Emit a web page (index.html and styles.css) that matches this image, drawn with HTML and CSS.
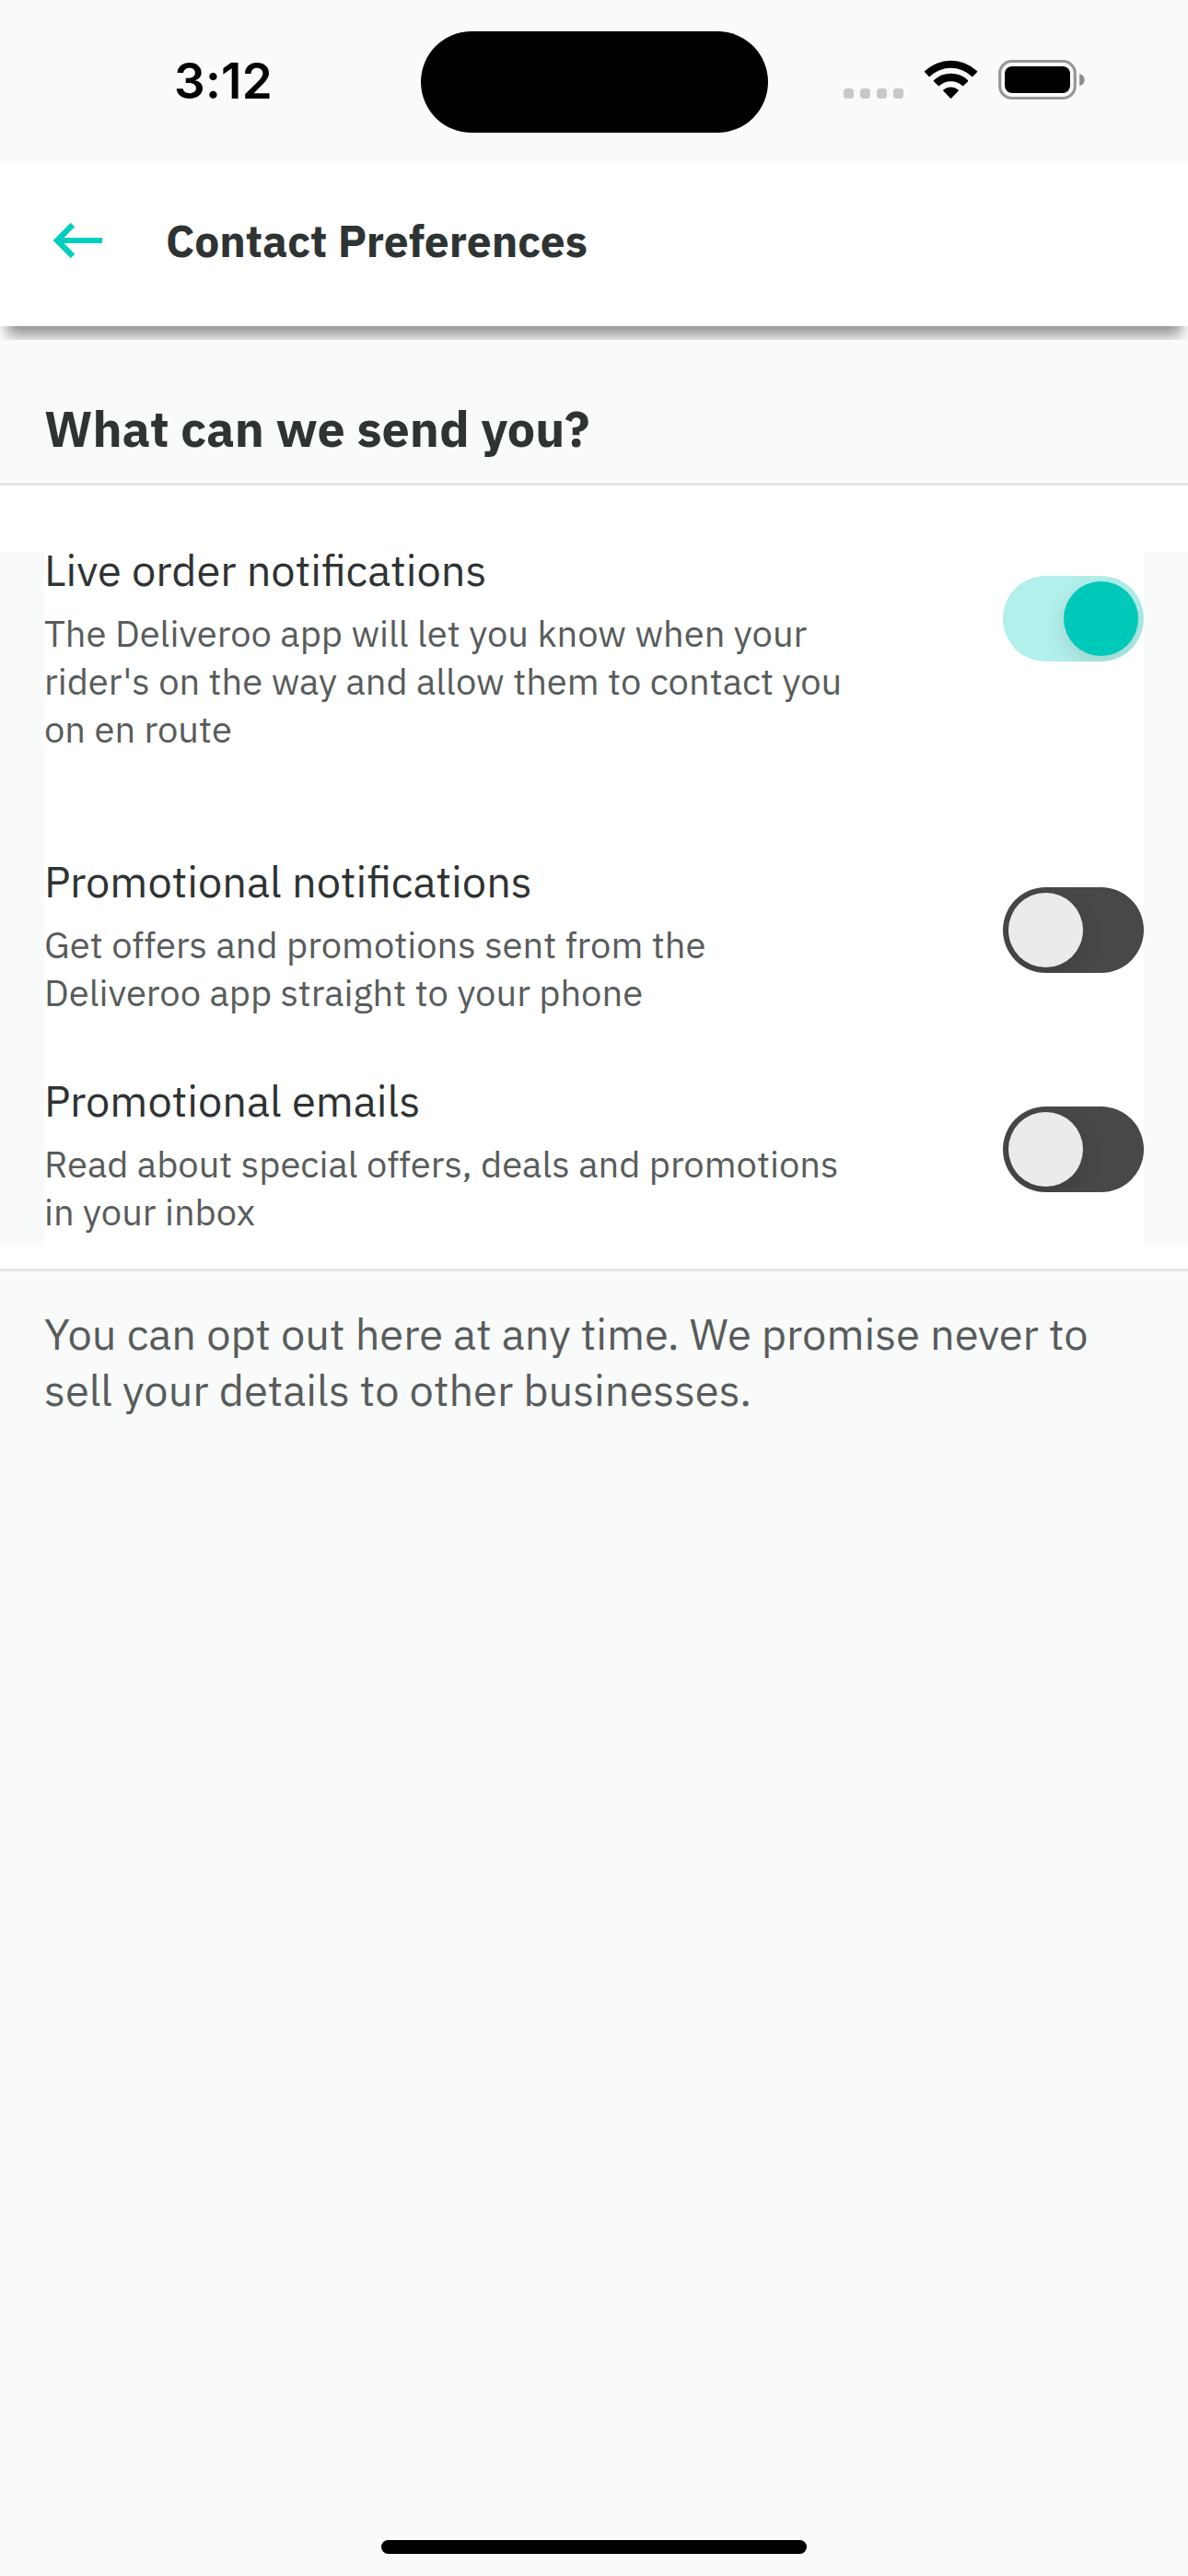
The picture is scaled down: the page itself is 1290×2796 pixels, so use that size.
FILE: index.html
```html
<!DOCTYPE html>
<html lang="en">
<head>
<meta charset="utf-8">
<title>Contact Preferences</title>
<link rel="stylesheet" href="styles.css">
</head>
<body>
<div class="status">
  <div class="time">3:12</div>
  <div class="island"></div>
  <svg class="indicators" width="264" height="44" viewBox="0 0 264 44" aria-hidden="true">
    <g fill="#c7c9c8">
      <rect x="0" y="31" width="11" height="11" rx="3.5"/>
      <rect x="18" y="31" width="11" height="11" rx="3.5"/>
      <rect x="36" y="31" width="11" height="11" rx="3.5"/>
      <rect x="54" y="31" width="11" height="11" rx="3.5"/>
    </g>
    <g fill="#000">
      <path d="M88 13.2Q87.5 12.6 88.2 12A41.500 41.500 0 0 1 144.800 12Q145.500 12.600 145 13.200L140.400 17.900Q139.800 18.500 139.200 17.900A33 33 0 0 0 93.800 17.900Q93.200 18.500 92.600 17.900Z"/>
      <path d="M98 23.400Q97.400 22.800 98.100 22.100A26.500 26.500 0 0 1 134.900 22.100Q135.600 22.800 135 23.400L130.200 28.100Q129.600 28.700 128.900 28.100A18 18 0 0 0 104.100 28.100Q103.400 28.700 102.800 28.100Z"/>
      <path d="M108.200 33.600Q107.600 33 108.400 32.400A12.500 12.500 0 0 1 124.600 32.400Q125.400 33 124.800 33.600L117.200 41.400Q116.500 42.100 115.800 41.400Z"/>
    </g>
    <rect x="169.700" y="1.500" width="81.600" height="40" rx="13" fill="none" stroke="#959896" stroke-width="3.200"/>
    <rect x="175" y="7" width="71" height="29" rx="8" fill="#000"/>
    <path d="M256.200 15Q261.700 17 261.700 21.700T256.200 28.300Z" fill="#8b8e8c"/>
  </svg>
</div>
<header class="header">
  <svg class="back" width="54" height="38" viewBox="0 0 54 38" aria-label="Back">
    <path d="M22 2L5 19L22 36M5 19H54" fill="none" stroke="#00cebe" stroke-width="6.200"/>
  </svg>
  <h1 class="title">Contact Preferences</h1>
</header>
<main>
  <h2 class="section-title">What can we send you?</h2>
  <div class="panel">
    <div class="rows">
      <section class="row row-live">
        <div class="copy">
          <h3 class="name">Live order notifications</h3>
          <p class="desc">The Deliveroo app will let you know when your<br>rider's on the way and allow them to contact you<br>on en route</p>
        </div>
        <div class="toggle on"><div class="knob"></div></div>
      </section>
      <section class="row row-push">
        <div class="copy">
          <h3 class="name">Promotional notifications</h3>
          <p class="desc">Get offers and promotions sent from the<br>Deliveroo app straight to your phone</p>
        </div>
        <div class="toggle"><div class="knob"></div></div>
      </section>
      <section class="row row-email">
        <div class="copy">
          <h3 class="name">Promotional emails</h3>
          <p class="desc">Read about special offers, deals and promotions<br>in your inbox</p>
        </div>
        <div class="toggle"><div class="knob"></div></div>
      </section>
    </div>
  </div>
  <p class="note">You can opt out here at any time. We promise never to<br>sell your details to other businesses.</p>
</main>
<div class="home"></div>
</body>
</html>
```
FILE: styles.css
```css
* { box-sizing: border-box; margin: 0; }

body {
  width: 1290px;
  height: 2796px;
  display: flex;
  flex-direction: column;
  overflow: hidden;
  background: #f9fbfa;
  color: #2e3333;
  font-family: "IBM Plex Sans", Roboto, sans-serif;
}

.status {
  height: 177px;
  flex: none;
  display: grid;
  grid-template-columns: 457px 377px 1fr;
  align-items: start;
}
.time {
  padding: 56px 0 0 189px;
  font: 600 53px/64px Inter, sans-serif;
  letter-spacing: 0.2px;
  color: #000;
}
.island {
  height: 110px;
  margin-top: 34px;
  border-radius: 55px;
  background: #000;
}
.indicators { margin: 65px 0 0 82px; }

.header {
  height: 177px;
  flex: none;
  display: flex;
  align-items: center;
  gap: 69px;
  padding: 0 57px 9px;
  background: #fff;
  box-shadow: 0 18px 14px -8px rgba(0, 0, 0, 0.42);
  clip-path: inset(0 0 -15px 0);
}
.title { font-size: 47.9px; line-height: 60px; font-weight: 700; }

.section-title {
  padding: 76px 48px 24px;
  border-bottom: 3px solid #e4e6ea;
  font-size: 53.9px;
  line-height: 70px;
  font-weight: 700;
}

.panel {
  padding: 72px 0 24px;
  background: #fff;
  border-bottom: 3px solid #e4e6ea;
}
.rows { padding: 0 48px; background: linear-gradient(#fff, #fff) 48px 0 / 1194px 100% no-repeat #f9fbfa; }
.row { display: flex; justify-content: space-between; }
.row-live { height: 338px; }
.row-push { height: 238px; }
.row-email { height: 178px; }
.name { font-size: 47px; line-height: 40px; font-weight: 400; margin-bottom: 22px; }
.desc { font-size: 39.95px; line-height: 52px; color: #585c5c; white-space: nowrap; }

.toggle {
  width: 153px;
  height: 93px;
  margin-top: 26px;
  padding: 6px;
  display: flex;
  overflow: hidden;
  border-radius: 47px;
  background: #48484a;
}
.knob {
  width: 81px;
  height: 81px;
  border-radius: 50%;
  background: #ebebeb;
  box-shadow: 0 9px 24px rgba(0, 0, 0, 0.12);
}
.on { justify-content: flex-end; background: #b2f0eb; }
.on .knob { background: #00c9ba; }

.note {
  padding: 37px 48px 0;
  font-size: 47px;
  line-height: 61px;
  color: #585c5c;
}

.home {
  width: 462px;
  height: 15px;
  flex: none;
  margin: auto auto 24px;
  border-radius: 8px;
  background: #000;
}
```
